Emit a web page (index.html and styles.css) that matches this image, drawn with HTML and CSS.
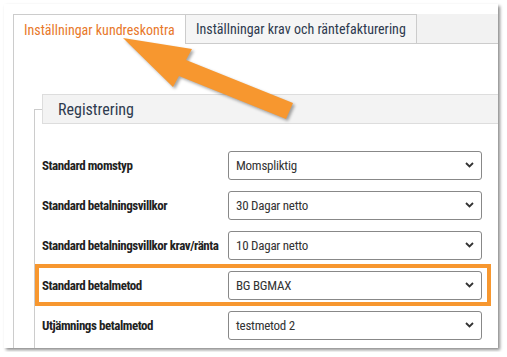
FILE: index.html
```html
<!DOCTYPE html>
<html lang="sv">
<head>
    <meta charset="UTF-8">
    <meta name="viewport" content="width=device-width, initial-scale=1.0">
    <title>Inställningar kundreskontra</title>
    <link rel="stylesheet" href="styles.css">
</head>
<body>
    <div class="window">
        <div class="tabs">
            <div class="tab active">Inställningar kundreskontra</div>
            <div class="tab">Inställningar krav och räntefakturering</div>
            <div class="tab-fill"></div>
        </div>

        <div class="content">
            <div class="fieldset">
                <div class="legend">Registrering</div>

                <div class="rows">
                    <div class="row">
                        <label class="row-label">Standard momstyp</label>
                        <div class="select-box">
                            <span>Momspliktig</span>
                            <svg class="chevron" width="9" height="6" viewBox="0 0 9 6"><path d="M1 1 L4.5 4.5 L8 1" fill="none" stroke="#333" stroke-width="1.8"/></svg>
                        </div>
                    </div>
                    <div class="row">
                        <label class="row-label">Standard betalningsvillkor</label>
                        <div class="select-box">
                            <span>30 Dagar netto</span>
                            <svg class="chevron" width="9" height="6" viewBox="0 0 9 6"><path d="M1 1 L4.5 4.5 L8 1" fill="none" stroke="#333" stroke-width="1.8"/></svg>
                        </div>
                    </div>
                    <div class="row">
                        <label class="row-label">Standard betalningsvillkor krav/ränta</label>
                        <div class="select-box">
                            <span>10 Dagar netto</span>
                            <svg class="chevron" width="9" height="6" viewBox="0 0 9 6"><path d="M1 1 L4.5 4.5 L8 1" fill="none" stroke="#333" stroke-width="1.8"/></svg>
                        </div>
                    </div>
                    <div class="row">
                        <label class="row-label">Standard betalmetod</label>
                        <div class="select-box">
                            <span>BG BGMAX</span>
                            <svg class="chevron" width="9" height="6" viewBox="0 0 9 6"><path d="M1 1 L4.5 4.5 L8 1" fill="none" stroke="#333" stroke-width="1.8"/></svg>
                        </div>
                    </div>
                    <div class="row">
                        <label class="row-label">Utjämnings betalmetod</label>
                        <div class="select-box">
                            <span>testmetod 2</span>
                            <svg class="chevron" width="9" height="6" viewBox="0 0 9 6"><path d="M1 1 L4.5 4.5 L8 1" fill="none" stroke="#333" stroke-width="1.8"/></svg>
                        </div>
                    </div>
                </div>
            </div>
        </div>
    </div>

    <!-- annotations over the screenshot -->
    <div class="highlight"></div>
    <svg class="arrow" width="507" height="357" viewBox="0 0 507 357">
        <polygon points="123,38 192,49 186,60 293,103 286,119 179,76 173,87" fill="#f7972f"/>
    </svg>
</body>
</html>
```

FILE: styles.css
```css
body {
    margin: 0;
    background-color: #fff;
    font-family: 'Roboto Condensed', 'Liberation Sans Narrow', 'Roboto', sans-serif;
    color: #333;
}

.window {
    margin: 4px;
    width: 494px;
    height: 344px;
    padding-top: 10px;
    box-sizing: border-box;
    background-color: #fff;
    box-shadow: 2px 2px 3px rgba(0, 0, 0, 0.45);
    overflow: hidden;
    display: flex;
    flex-direction: column;
}

.tabs {
    display: flex;
    margin-left: 9px;
    height: 30px;
    background-color: #f2f2f2;
}

.tab {
    display: flex;
    align-items: center;
    box-sizing: border-box;
    height: 30px;
    padding: 0 10px;
    font-size: 14px;
    color: #2e3a4e;
    background-color: #f5f5f5;
    border-top: 1px solid #ccc;
    border-right: 1px solid #ccc;
    border-bottom: 1px solid #ccc;
}

.tab.active {
    width: 173px;
    color: #e8782a;
    background-color: #fff;
    border-left: 1px solid #ccc;
    border-bottom: none;
}

.tab:nth-child(2) {
    width: 231px;
}

.tab-fill {
    flex: 1;
    border-bottom: 1px solid #ccc;
}

.content {
    flex: 1;
    margin-left: 9px;
    padding: 65px 0 0 20px;
    border-left: 1px solid #ccc;
}

.fieldset {
    height: 100%;
    border-left: 1px solid #ccc;
    border-top: 1px solid #ccc;
    width: 12px;
    overflow: visible;
}

.legend {
    margin: -16px 0 0 7px;
    width: 500px;
    height: 30px;
    box-sizing: border-box;
    padding-left: 15px;
    display: flex;
    align-items: center;
    font-size: 16px;
    color: #2e3a4e;
    background-color: #f3f3f3;
    border: 1px solid #ddd;
}

.rows {
    width: 448px;
    padding: 21px 0 0 7px;
}

.row {
    display: flex;
    align-items: center;
    height: 40px;
}

.row-label {
    width: 186px;
    white-space: nowrap;
    font-size: 13px;
    font-weight: bold;
    letter-spacing: -0.45px;
    color: #222;
}

.select-box {
    display: flex;
    align-items: center;
    justify-content: space-between;
    box-sizing: border-box;
    width: 254px;
    height: 29px;
    padding: 0 7px 0 7px;
    border: 1px solid #888;
    border-radius: 3px;
    font-size: 13px;
    letter-spacing: -0.25px;
    color: #333;
}

.highlight {
    position: absolute;
    left: 35px;
    top: 264px;
    width: 448px;
    height: 34px;
    border: 4px solid #f7972f;
}

.arrow {
    position: absolute;
    left: 0;
    top: 0;
    filter: drop-shadow(2px 2px 1.5px rgba(0, 0, 0, 0.35));
}
```
